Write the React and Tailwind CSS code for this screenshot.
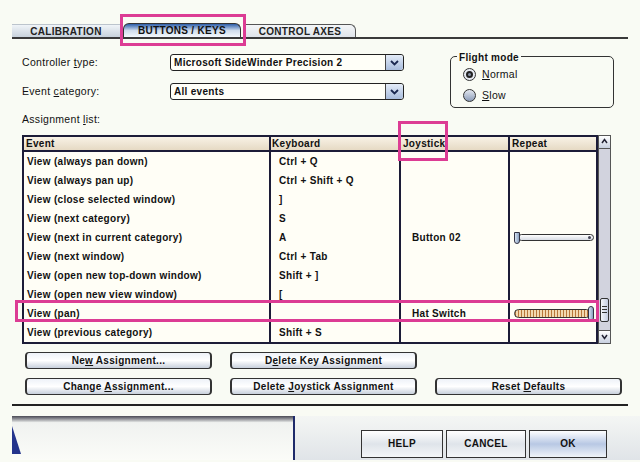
const rows = [
  { event: 'View (always pan down)', key: 'Ctrl + Q', joy: '' },
  { event: 'View (always pan up)', key: 'Ctrl + Shift + Q', joy: '' },
  { event: 'View (close selected window)', key: ']', joy: '' },
  { event: 'View (next category)', key: 'S', joy: '' },
  { event: 'View (next in current category)', key: 'A', joy: 'Button 02', slider: 'low' },
  { event: 'View (next window)', key: 'Ctrl + Tab', joy: '' },
  { event: 'View (open new top-down window)', key: 'Shift + ]', joy: '' },
  { event: 'View (open new view window)', key: '[', joy: '' },
  { event: 'View (pan)', key: '', joy: 'Hat Switch', slider: 'high' },
  { event: 'View (previous category)', key: 'Shift + S', joy: '' },
];

function Slider({ level }) {
  if (level === 'low') {
    return (
      <div className="relative h-[11px] w-[80px] ml-[4px]">
        <div className="absolute left-[4px] right-0 top-[2px] h-[7px] rounded-full border border-[#333] bg-gradient-to-b from-[#ffffff] to-[#d8dce4]">
          <div className="absolute right-[2px] top-[1px] h-[3px] w-[3px] rounded-full bg-[#445]" />
        </div>
        <div className="absolute left-0 top-0 h-[12px] w-[6px] rounded-b-full rounded-t-[2px] border border-[#334] bg-gradient-to-r from-[#d8e4f4] to-[#8aa0c0]" />
      </div>
    );
  }
  return (
    <div className="relative h-[15px] w-[80px] ml-[4px]">
      <div className="absolute left-0 right-[3px] top-[3px] h-[9px] rounded-full border border-[#333] bg-[repeating-linear-gradient(90deg,#b8773a_0_1px,#f2d9b0_1px_3px)]" />
      <div className="absolute right-0 top-0 h-[15px] w-[6px] rounded-[3px] border border-[#334] bg-gradient-to-r from-[#d8e4f4] to-[#8aa0c0]" />
    </div>
  );
}

function Dropdown({ value }) {
  return (
    <div className="flex h-[17px] w-[234px] items-stretch rounded-[3px] border border-[#222] bg-[#fffff8]">
      <div className="flex flex-1 items-center pl-[3px] font-bold">{value}</div>
      <div className="flex w-[18px] items-center justify-center rounded-r-[3px] border-l border-[#444] bg-gradient-to-b from-[#e4ecf8] to-[#a8bcdc]">
        <svg width="9" height="6" viewBox="0 0 9 6">
          <path d="M1 1 L4.5 4.5 L8 1" fill="none" stroke="#1a2850" strokeWidth="1.8" />
        </svg>
      </div>
    </div>
  );
}

function WideButton({ children }) {
  return (
    <div className="flex h-[17px] w-[187px] items-center justify-center rounded-[4px] border border-[#333] border-l-[2px] border-r-[2px] bg-gradient-to-b from-[#eef2f8] via-[#ffffff] to-[#c8d0dc] font-bold text-[#111]">
      <span>{children}</span>
    </div>
  );
}

function Radio({ checked, children }) {
  return (
    <div className="flex items-center gap-[6px]">
      <div className={`flex h-[13px] w-[13px] items-center justify-center rounded-full border border-[#333] ${checked ? 'bg-[#e8ecf4]' : 'bg-gradient-to-b from-[#e4e8f0] to-[#8c9cb8]'}`}>
        {checked && <div className="h-[7px] w-[7px] rounded-full border-2 border-[#222] bg-[#8a94a8]" />}
      </div>
      <span>{children}</span>
    </div>
  );
}

export default function App() {
  return (
    <div
      className="relative h-[462px] w-[640px] overflow-hidden bg-[#f9fbf4] text-[10px] tracking-[0.3px] text-[#111]"
      style={{ fontFamily: '"Liberation Sans", Arial, sans-serif' }}
    >
      {/* tabs */}
      <div className="relative px-[12px] pt-[24px]">
        <div className="flex h-[15px] items-end border-b-2 border-[#3a3a3a] pr-[272px]">
          <div className="flex h-[13px] w-[108px] items-center justify-center border-t border-[#bcc4cc] bg-gradient-to-b from-[#f0f4f8] to-[#c8d2dc] font-bold text-[#222]">
            CALIBRATION
          </div>
          <div className="ml-[3px] flex h-[14px] w-[118px] items-center justify-center rounded-t-[6px] border border-b-0 border-[#333] bg-gradient-to-b from-[#2d5ea8] via-[#cfdcec] to-[#f4f8fc] font-bold text-[#111]">
            BUTTONS / KEYS
          </div>
          <div className="ml-[3px] flex h-[13px] w-[112px] items-center justify-center rounded-tr-[6px] border border-b-0 border-[#555] bg-gradient-to-b from-[#f4f6f8] to-[#dfe4ea] font-bold text-[#222]">
            CONTROL AXES
          </div>
        </div>
        <div className="pointer-events-none absolute left-[120px] top-[14px] h-[32px] w-[126px] border-[3px] border-[#dc3c94]" />
      </div>

      {/* form */}
      <div className="flex pl-[22px] pt-[15px]">
        <div className="flex w-[428px] flex-col">
          <div className="flex items-center">
            <span className="w-[148px] text-[10.5px]">Controller <span className="underline">t</span>ype:</span>
            <Dropdown value="Microsoft SideWinder Precision 2" />
          </div>
          <div className="mt-[12px] flex items-center">
            <span className="w-[148px] text-[10.5px]">Event <span className="underline">c</span>ategory:</span>
            <Dropdown value="All events" />
          </div>
          <div className="mt-[12px] text-[10.5px]">
            Assignment <span className="underline">l</span>ist:
          </div>
        </div>
        <div className="relative mt-[2px] h-[52px] w-[164px] rounded-[5px] border border-[#333]">
          <div className="absolute left-[6px] top-[-7px] bg-[#f9fbf4] px-[2px] font-bold">Flight mode</div>
          <div className="flex flex-col gap-[5px] pl-[12px] pt-[10px] text-[10.5px]">
            <Radio checked><span className="underline">N</span>ormal</Radio>
            <Radio><span className="underline">S</span>low</Radio>
          </div>
        </div>
      </div>

      {/* table */}
      <div className="relative ml-[22px] mt-[7px] flex w-[590px]">
        <div className="w-[576px] border-2 border-[#1c1c38] bg-[#fffef6]">
          <div className="flex h-[15px] border-b-2 border-[#1c1c38] font-bold">
            <div className="flex w-[247px] items-center border-r-2 border-[#1c1c38] bg-gradient-to-b from-[#f8f2e6] to-[#e6dac4] pl-[2px]">Event</div>
            <div className="flex w-[130px] items-center border-r-2 border-[#1c1c38] bg-gradient-to-b from-[#f8f2e6] to-[#e6dac4] pl-[1px]">Keyboard</div>
            <div className="flex w-[109px] items-center border-r-2 border-[#1c1c38] bg-gradient-to-b from-[#f8f2e6] to-[#e6dac4] pl-[2px]">Joystick</div>
            <div className="flex flex-1 items-center bg-gradient-to-b from-[#f8f2e6] to-[#e6dac4] pl-[2px]">Repeat</div>
          </div>
          {rows.map((r, i) => (
            <div key={i} className="flex h-[19px] font-bold">
              <div className="flex w-[247px] items-center border-r-2 border-[#1c1c38] pl-[3px]">{r.event}</div>
              <div className="flex w-[130px] items-center border-r-2 border-[#1c1c38] pl-[8px]">{r.key}</div>
              <div className="flex w-[109px] items-center border-r-2 border-[#1c1c38] pl-[11px]">{r.joy}</div>
              <div className="flex flex-1 items-center">{r.slider && <Slider level={r.slider} />}</div>
            </div>
          ))}
        </div>
        {/* scrollbar */}
        <div className="flex w-[13px] flex-col border border-[#555] bg-[#d2d3de]">
          <div className="flex h-[13px] items-center justify-center border-b border-[#555] bg-gradient-to-b from-[#ffffff] to-[#c8d0e0]">
            <svg width="7" height="7" viewBox="0 0 7 7"><path d="M1 5 L3.5 1.5 L6 5" fill="none" stroke="#223" strokeWidth="1.5" /></svg>
          </div>
          <div className="flex-1" />
          <div className="mx-[1px] mb-[8px] flex h-[24px] flex-col items-center justify-center gap-[2px] rounded-[2px] border border-[#333] bg-gradient-to-r from-[#f4f6fa] to-[#c4cce0]">
            <div className="h-px w-[5px] bg-[#333]" />
            <div className="h-px w-[5px] bg-[#333]" />
            <div className="h-px w-[5px] bg-[#333]" />
          </div>
          <div className="flex h-[13px] items-center justify-center border-t border-[#555] bg-gradient-to-b from-[#ffffff] to-[#c8d0e0]">
            <svg width="7" height="7" viewBox="0 0 7 7"><path d="M1 2 L3.5 5.5 L6 2" fill="none" stroke="#223" strokeWidth="1.5" /></svg>
          </div>
        </div>
        {/* highlights */}
        <div className="pointer-events-none absolute left-[-7px] top-[165px] h-[22px] w-[584px] border-[3px] border-[#dc3c94]" />
        <div className="pointer-events-none absolute left-[376px] top-[-14px] h-[40px] w-[50px] border-[3px] border-[#dc3c94]" />
      </div>

      {/* action buttons */}
      <div className="ml-[25px] mt-[8px] flex flex-col gap-[9px]">
        <div className="flex gap-[18px]">
          <WideButton>Ne<span className="underline">w</span> Assignment...</WideButton>
          <WideButton>D<span className="underline">e</span>lete Key Assignment</WideButton>
        </div>
        <div className="flex gap-[18px]">
          <WideButton>Change <span className="underline">A</span>ssignment...</WideButton>
          <WideButton>Delete <span className="underline">J</span>oystick Assignment</WideButton>
          <WideButton>Reset <span className="underline">D</span>efaults</WideButton>
        </div>
      </div>

      <div className="mx-[12px] mt-[9px] h-[2px] bg-[#222]" />

      {/* bottom bar */}
      <div className="ml-[12px] mt-[10px] flex h-[44px]">
        <div className="relative w-[283px] border-r-2 border-[#1e2a6a] bg-gradient-to-b from-[#4a4a55] via-[#f0f2f0] via-[15%] to-[#fbfcf8]">
          <div className="absolute left-0 top-[10px] h-0 w-0 border-l-[9px] border-t-[28px] border-l-[#24348c] border-t-transparent" />
        </div>
        <div className="flex flex-1 items-end bg-gradient-to-b from-[#f4f6f4] to-[#e0e4e8] pb-[2px] pl-[66px]">
          <div className="flex gap-[3px]">
            <div className="flex h-[28px] w-[82px] items-center justify-center border border-[#333] bg-gradient-to-b from-[#ffffff] via-[#dfe4ea] to-[#f4f6f8] font-bold">HELP</div>
            <div className="flex h-[28px] w-[80px] items-center justify-center border border-[#333] bg-gradient-to-b from-[#ffffff] via-[#dfe4ea] to-[#f4f6f8] font-bold">CANCEL</div>
            <div className="flex h-[28px] w-[78px] items-center justify-center border border-[#333] bg-gradient-to-b from-[#ffffff] via-[#b8c8e4] to-[#f0f4f8] font-bold">OK</div>
          </div>
        </div>
      </div>
    </div>
  );
}
